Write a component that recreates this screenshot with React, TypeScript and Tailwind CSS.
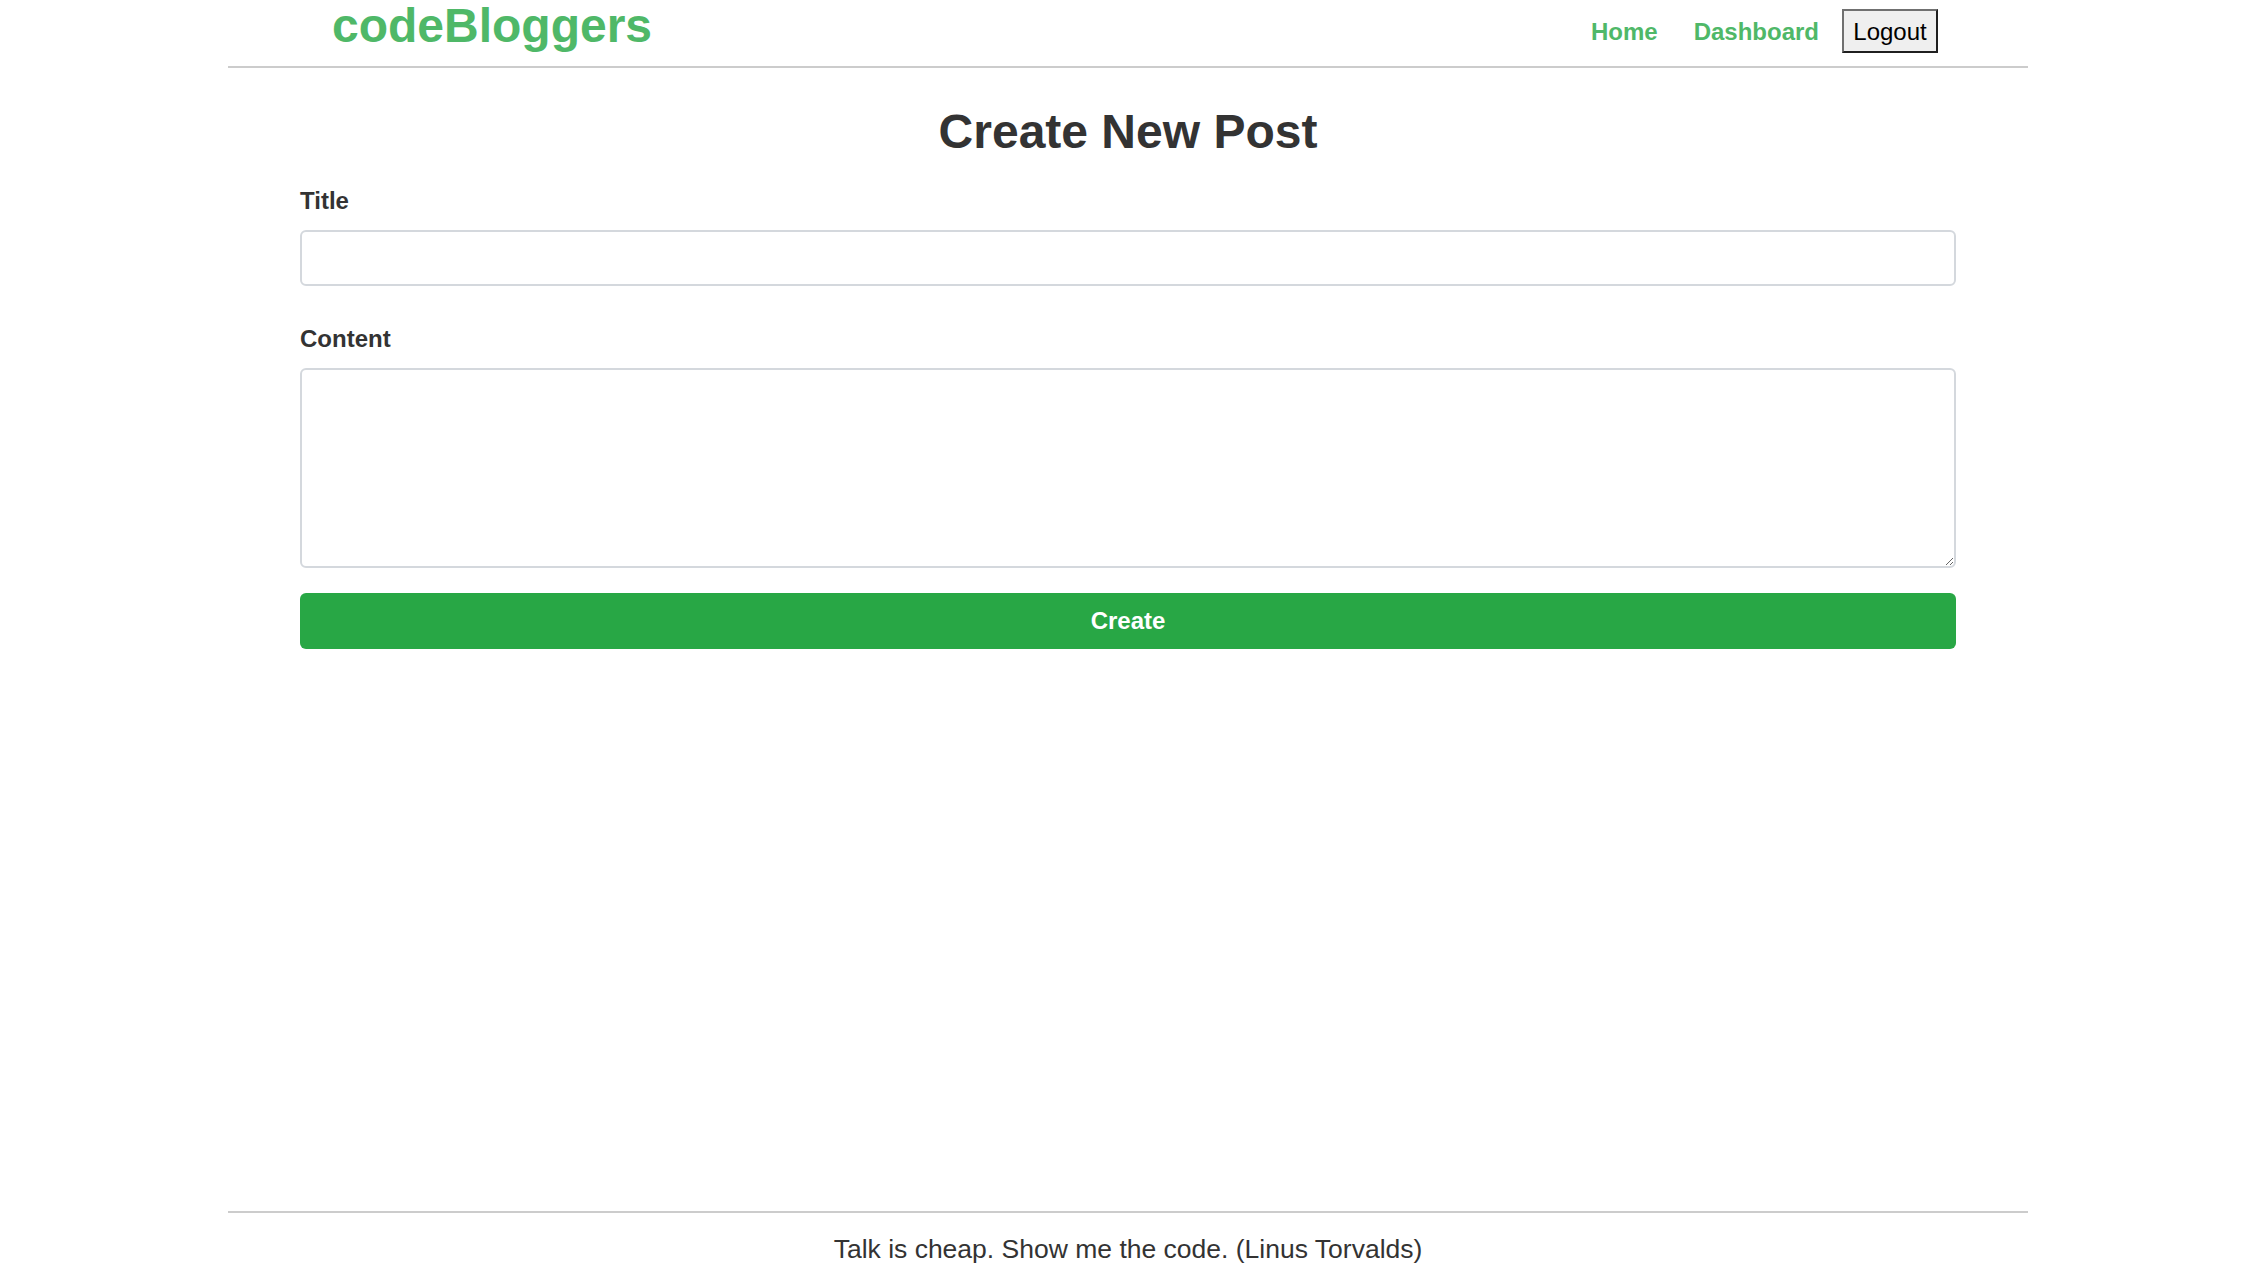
import React from "react";

export default function App() {
  const font = { fontFamily: '"Liberation Sans", Arial, sans-serif' };
  return (
    <div
      className="min-h-screen flex flex-col bg-white text-[#333]"
      style={font}
    >
      <div className="w-[1800px] mx-auto flex flex-col flex-1">
        <header className="h-[68px] flex items-start justify-between border-b-2 border-[#cccccc]">
          <a
            href="#"
            className="ml-[104px] -mt-[2px] text-[48px] leading-[55px] font-bold text-[#4fb868]"
          >
            codeBloggers
          </a>
          <nav className="flex items-center mt-[9px] mr-[90px] h-[44px]">
            <a href="#" className="text-[24px] leading-[28px] pt-[2px] font-bold text-[#4fb868] mr-[36px]">
              Home
            </a>
            <a href="#" className="text-[24px] leading-[28px] pt-[2px] font-bold text-[#4fb868] mr-[23px]">
              Dashboard
            </a>
            <button
              type="button"
              className="w-[96px] h-[44px] pt-[2px] bg-[#efefef] text-black text-[24px] leading-[28px] border-2 border-t-[#707070] border-l-[#707070] border-r-[#1f1f1f] border-b-[#1f1f1f] border-solid"
            >
              Logout
            </button>
          </nav>
        </header>

        <main className="flex-1 px-[72px]">
          <h1 className="mt-[36px] text-center text-[48px] leading-[55px] font-bold text-[#333]">
            Create New Post
          </h1>
          <form className="flex flex-col" onSubmit={(e) => e.preventDefault()}>
            <label className="mt-[28px] text-[24px] leading-[28px] font-bold text-[#333]">
              Title
            </label>
            <input
              type="text"
              className="mt-[15px] h-[56px] w-full border-2 border-[#d4d8dd] rounded-[6px] px-3 text-[24px] outline-none"
            />
            <label className="mt-[39px] text-[24px] leading-[28px] font-bold text-[#333]">
              Content
            </label>
            <textarea className="mt-[15px] h-[200px] w-full border-2 border-[#d4d8dd] rounded-[6px] px-3 py-2 text-[24px] outline-none" />
            <button
              type="submit"
              className="mt-[25px] h-[56px] w-full rounded-[6px] bg-[#28a745] text-white text-[24px] font-bold"
            >
              Create
            </button>
          </form>
        </main>

        <footer className="border-t-2 border-[#cccccc] pt-[21px] pb-[19px] text-center text-[26.5px] leading-[30px] text-[#333]">
          Talk is cheap. Show me the code. (Linus Torvalds)
        </footer>
      </div>
    </div>
  );
}
